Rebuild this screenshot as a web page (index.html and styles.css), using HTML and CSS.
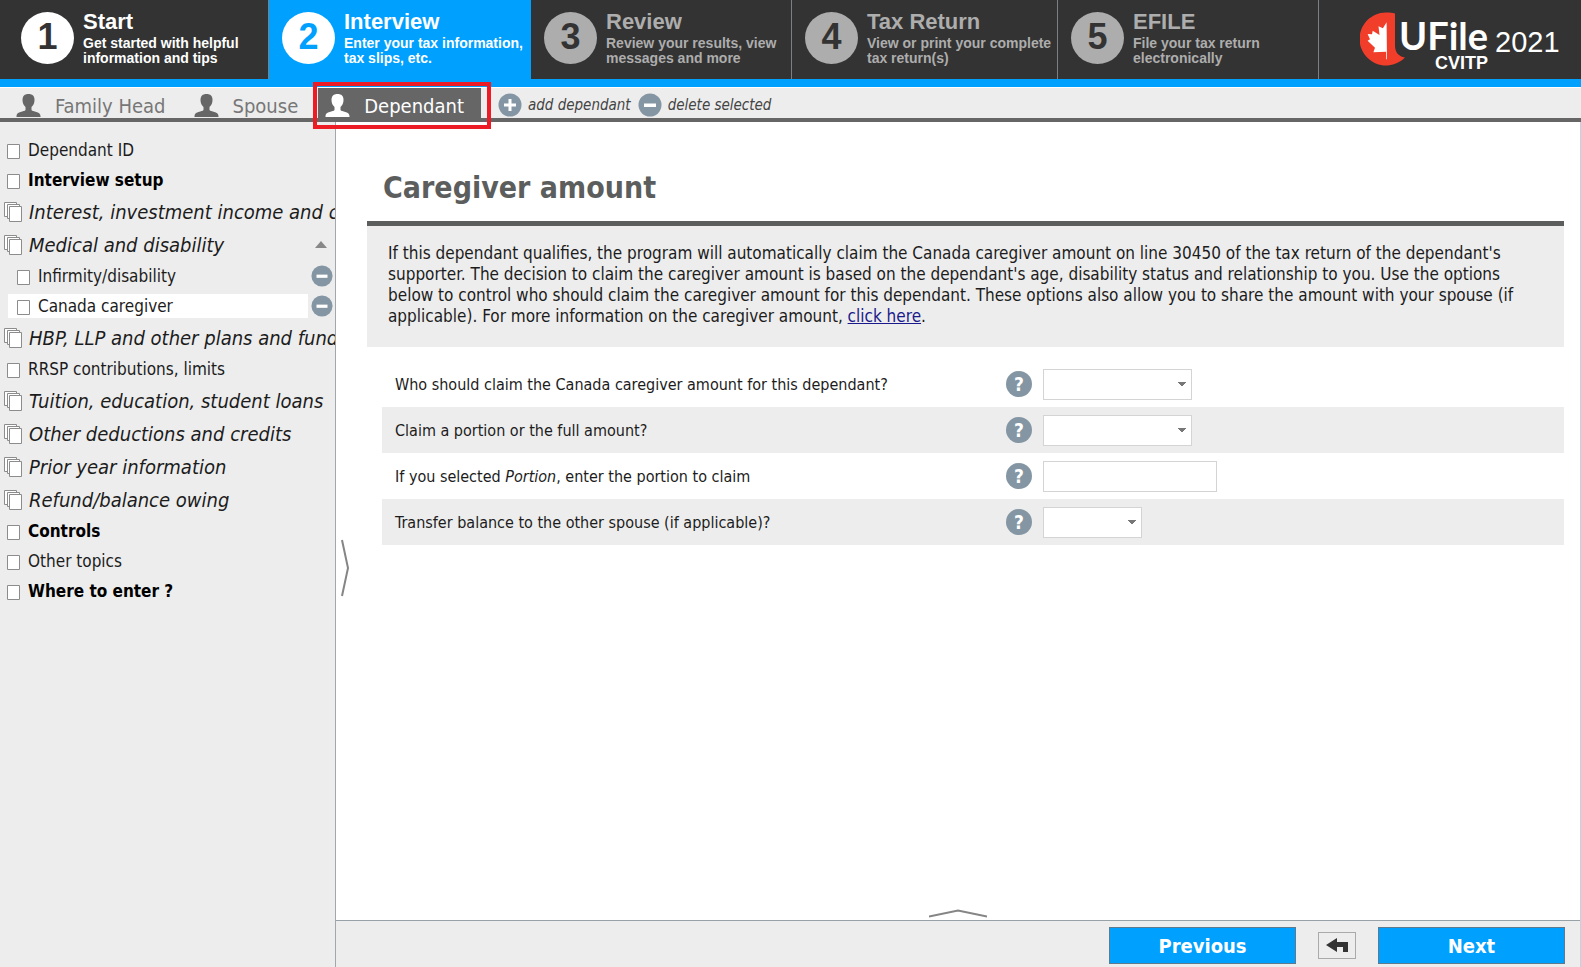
FILE: index.html
```html
<!DOCTYPE html>
<html lang="en">
<head>
<meta charset="utf-8">
<title>UFile CVITP 2021 - Caregiver amount</title>
<link rel="stylesheet" href="styles.css">
</head>
<body>
<svg class="defs" aria-hidden="true">
  <symbol id="person" viewBox="0 0 24 23"><path d="M12 0C8 0 6 2 6 6c0 3 1 5 3 7v3c-1 2-9 1-9 6v1h24v-1c0-5-8-4-9-6v-3c2-2 3-4 3-7 0-4-2-6-6-6z"/></symbol>
  <symbol id="page" viewBox="0 0 13 15"><path d="M.5.5h12v14H.5z" fill="#fff" stroke="#8c8c8c"/></symbol>
  <symbol id="pages" viewBox="0 0 18 20"><g fill="#fff" stroke="#8c8c8c"><path d="M.5.5h12v14H.5z"/><path d="M3.500 2.500h12v14h-12z"/><path d="M5.500 4.500h12v15h-12z"/></g></symbol>
  <symbol id="minus" viewBox="0 0 24 24"><circle cx="12" cy="12" r="11.500" fill="#8496a3"/><path d="M6 10.500h12v3.500H6z" fill="#fff"/></symbol>
  <symbol id="plus" viewBox="0 0 24 24"><circle cx="12" cy="12" r="11.500" fill="#8496a3"/><path d="M6 12h12M12 6v12" stroke="#fff" stroke-width="3"/></symbol>
</svg>
<header class="steps">
  <a class="step done" href="#"><span class="num">1</span><span class="txt"><b>Start</b><span>Get started with helpful<br>information and tips</span></span></a>
  <a class="step active" href="#"><span class="num">2</span><span class="txt"><b>Interview</b><span>Enter your tax information,<br>tax slips, etc.</span></span></a>
  <a class="step" href="#"><span class="num">3</span><span class="txt"><b>Review</b><span>Review your results, view<br>messages and more</span></span></a>
  <a class="step" href="#"><span class="num">4</span><span class="txt"><b>Tax Return</b><span>View or print your complete<br>tax return(s)</span></span></a>
  <a class="step" href="#"><span class="num">5</span><span class="txt"><b>EFILE</b><span>File your tax return<br>electronically</span></span></a>
  <div class="logo">
    <svg width="46" height="54" viewBox="0 0 46 54" aria-hidden="true"><path d="M35 1.500C32 .5 30 .5 27 .5a26.500 26.500 0 1 0 18 45c-7-1-10-6-10-12z" fill="#f03e2b"/><path d="M26.600 10.300l-3.700 6-4.400-2 1 8.700-6.800-4.300-.7 3.600-4.400-.2 2.400 5.200-2.400 1.400 7.400 7-1.600 4.600 12.700-.6.200 7.600h.7z" fill="#fff"/></svg>
    <div class="brand"><span class="name">UFile</span><span class="sub">CVITP</span></div>
    <span class="year">2021</span>
  </div>
</header>
<nav class="people">
  <a class="person" href="#"><svg><use href="#person"/></svg>Family Head</a>
  <a class="person" href="#"><svg><use href="#person"/></svg>Spouse</a>
  <div class="current"><a class="person selected" href="#"><svg><use href="#person"/></svg>Dependant</a></div>
  <button class="action"><svg><use href="#plus"/></svg>add dependant</button>
  <button class="action"><svg><use href="#minus"/></svg>delete selected</button>
</nav>
<div class="work">
  <nav class="side">
    <a class="item" href="#"><svg><use href="#page"/></svg>Dependant ID</a>
    <a class="item strong" href="#"><svg><use href="#page"/></svg>Interview setup</a>
    <a class="item group" href="#"><svg><use href="#pages"/></svg>Interest, investment income and capital gains</a>
    <a class="item group" href="#"><svg><use href="#pages"/></svg>Medical and disability<i class="up"></i></a>
    <div class="child"><a class="item" href="#"><svg><use href="#page"/></svg>Infirmity/disability</a><button class="remove" aria-label="Remove Infirmity/disability"><svg><use href="#minus"/></svg></button></div>
    <div class="child"><a class="item open" href="#"><svg><use href="#page"/></svg>Canada caregiver</a><button class="remove" aria-label="Remove Canada caregiver"><svg><use href="#minus"/></svg></button></div>
    <a class="item group" href="#"><svg><use href="#pages"/></svg>HBP, LLP and other plans and funds</a>
    <a class="item" href="#"><svg><use href="#page"/></svg>RRSP contributions, limits</a>
    <a class="item group" href="#"><svg><use href="#pages"/></svg>Tuition, education, student loans</a>
    <a class="item group" href="#"><svg><use href="#pages"/></svg>Other deductions and credits</a>
    <a class="item group" href="#"><svg><use href="#pages"/></svg>Prior year information</a>
    <a class="item group" href="#"><svg><use href="#pages"/></svg>Refund/balance owing</a>
    <a class="item strong" href="#"><svg><use href="#page"/></svg>Controls</a>
    <a class="item" href="#"><svg><use href="#page"/></svg>Other topics</a>
    <a class="item strong" href="#"><svg><use href="#page"/></svg>Where to enter ?</a>
  </nav>
  <div class="right">
    <main class="main">
      <h1>Caregiver amount</h1>
      <p class="intro">If this dependant qualifies, the program will automatically claim the Canada caregiver amount on line 30450 of the tax return of the dependant's<br>supporter. The decision to claim the caregiver amount is based on the dependant's age, disability status and relationship to you. Use the options<br>below to control who should claim the caregiver amount for this dependant. These options also allow you to share the amount with your spouse (if<br>applicable). For more information on the caregiver amount, <a href="#">click here</a>.</p>
      <form class="form">
        <div class="row"><label for="who">Who should claim the Canada caregiver amount for this dependant?</label><button type="button" class="help">?</button><select id="who" class="field"><option></option></select></div>
        <div class="row"><label for="part">Claim a portion or the full amount?</label><button type="button" class="help">?</button><select id="part" class="field"><option></option></select></div>
        <div class="row"><label for="portion">If you selected <em>Portion</em>, enter the portion to claim</label><button type="button" class="help">?</button><input id="portion" class="field wide" type="text"></div>
        <div class="row"><label for="transfer">Transfer balance to the other spouse (if applicable)?</label><button type="button" class="help">?</button><select id="transfer" class="field narrow"><option></option></select></div>
      </form>
      <button class="expand side-handle" aria-label="Expand sidebar"><svg width="10" height="58" viewBox="0 0 10 58"><path d="M1 1l6 28-6 28" fill="none" stroke="#858585" stroke-width="2"/></svg></button>
      <button class="expand bottom-handle" aria-label="Expand messages"><svg width="58" height="9" viewBox="0 0 58 9"><path d="M0 7.500L29 1.500l29 6" fill="none" stroke="#858585" stroke-width="2"/></svg></button>
    </main>
    <footer class="foot">
      <button class="go">Previous</button>
      <button class="back" aria-label="Back"><svg width="22" height="16" viewBox="0 0 22 16"><path d="M0 7l11-7v4h11v10h-5V9h-6v5z" fill="#333"/></svg></button>
      <button class="go">Next</button>
    </footer>
  </div>
</div>
</body>
</html>
```
FILE: styles.css
```css
* { box-sizing: border-box; }
body {
  margin: 0;
  min-height: 100vh;
  display: flex;
  flex-direction: column;
  background: #fff;
  color: #1c1c1c;
  font-family: "DejaVu Sans Condensed", "Noto Sans", sans-serif;
  font-size: 17px;
}
a { color: inherit; text-decoration: none; }
button { margin: 0; padding: 0; border: 0; background: none; color: inherit; font: inherit; }
svg { display: block; flex: none; }
.defs { position: absolute; width: 0; height: 0; }

.steps {
  display: grid;
  grid-template-columns: 269fr 262fr 261fr 266fr 261fr 262fr;
  height: 87px;
  background: #333;
  border-bottom: 8px solid #00a0ff;
  font-family: "Liberation Sans", Arial, sans-serif;
}
.step {
  display: flex;
  gap: 9px;
  padding: 12px 0 0 13px;
  border-right: 1px solid #7b8085;
  color: #adadad;
  white-space: nowrap;
}
.step:first-child { padding-left: 21px; }
.step.done { color: #fff; }
.step.active { background: #00a0ff; color: #fff; border-color: #00a0ff; }
.num {
  flex: none;
  width: 53px;
  height: 52px;
  border-radius: 50%;
  background: #adadad;
  color: #333;
  font-size: 36px;
  font-weight: bold;
  line-height: 50px;
  text-align: center;
}
.done .num { background: #fff; }
.active .num { background: #fff; color: #00a0ff; }
.txt { font-size: 14px; font-weight: bold; line-height: 15px; }
.txt b { display: block; margin-bottom: 4px; font-size: 22px; line-height: 20px; }
.logo { display: flex; padding: 12px 0 0 41px; color: #fff; }
.brand { display: flex; flex-direction: column; align-items: flex-end; margin-left: -7px; }
.name { font-family: Lato, sans-serif; font-size: 38px; font-weight: bold; line-height: 46px; }
.sub { font-size: 18px; font-weight: bold; line-height: 10px; }
.year { margin-left: 7px; font-size: 29px; line-height: 60px; }

.people {
  display: flex;
  align-items: flex-end;
  height: 35px;
  background: #ededed;
  border-top: 1px solid #fff;
  border-bottom: 4px solid #666;
}
.person {
  display: flex;
  align-items: center;
  gap: 14px;
  height: 30px;
  padding: 5px 0 0 16px;
  color: #777;
  font-size: 20px;
  white-space: nowrap;
}
.person + .person { padding-left: 28px; }
.person svg { width: 25px; height: 23px; fill: #666; }
.current { position: relative; margin: 0 17px 0 20px; }
.current::after {
  content: "";
  position: absolute;
  inset: -6px -10px -11px -5px;
  border: 4px solid #ed1c24;
  z-index: 1;
  pointer-events: none;
}
.selected { padding: 5px 17px 0 7px; background: #666; color: #fff; }
.selected svg { fill: #fff; }
.action {
  display: flex;
  align-items: center;
  gap: 6px;
  height: 30px;
  padding-top: 3px;
  margin-right: 7px;
  color: #444;
  font-size: 15px;
  font-style: italic;
  white-space: nowrap;
}
.action svg { width: 24px; height: 24px; }

.work { flex: 1; display: flex; }
.side {
  flex: none;
  width: 336px;
  padding-top: 13px;
  overflow: hidden;
  background: #ededed;
  border-right: 1px solid #9fa8ad;
}
.item {
  display: flex;
  align-items: center;
  gap: 8px;
  height: 30px;
  padding-left: 7px;
  font-size: 17px;
  white-space: nowrap;
}
.item svg { width: 13px; height: 15px; margin-top: 3px; }
.strong { font-weight: bold; color: #000; }
.group { height: 33px; gap: 7px; padding-left: 4px; font-size: 20px; font-style: italic; }
.group svg { width: 18px; height: 20px; margin-top: 0; }
.up { margin: 0 8px 0 auto; border: 6px solid transparent; border-top: 0; border-bottom: 7px solid #888; }
.child { display: flex; align-items: center; gap: 3px; height: 30px; padding: 0 2px 0 8px; }
.child .item { flex: 1; height: 24px; padding-left: 9px; }
.child .open { background: #fff; }
.remove svg { width: 22px; height: 22px; }

.right { flex: 1; display: flex; flex-direction: column; min-width: 0; border-right: 1px solid #c3d2de; }
.main { position: relative; flex: 1; padding: 46px 16px 0 31px; }
h1 { margin: 0; padding: 0 16px 13px; border-bottom: 5px solid #5c5e5e; color: #5c5e5e; font-size: 30px; line-height: 40px; }
.intro { margin: 0; padding: 17px 21px 20px; background: #ededed; font-size: 17px; line-height: 21px; white-space: nowrap; }
.intro a { color: #1a1a8c; text-decoration: underline; }
.form { margin: 14px 0 0 15px; }
.row { display: flex; align-items: center; height: 46px; padding-left: 13px; font-size: 16px; }
.row:nth-child(even) { background: #ededed; }
.row label { flex: none; width: 611px; }
.help { width: 26px; height: 26px; margin-right: 11px; border-radius: 50%; background: #8496a3; color: #fff; font-size: 19px; font-weight: bold; line-height: 26px; }
.field {
  appearance: none;
  width: 149px;
  height: 31px;
  margin: 0;
  padding: 0 8px;
  border: 1px solid #d4d4d4;
  border-radius: 0;
  background: #fff;
  font: inherit;
}
select.field {
  background-image: linear-gradient(to bottom left, #777 50%, transparent 50%), linear-gradient(to bottom right, #777 50%, transparent 50%);
  background-position: right 9px center, right 5px center;
  background-size: 4px 5px;
  background-repeat: no-repeat;
}
.wide { width: 174px; }
.narrow { width: 99px; }
.expand { position: absolute; }
.side-handle { left: 5px; top: 417px; }
.bottom-handle { left: 593px; bottom: 2px; }
.foot {
  display: flex;
  align-items: center;
  justify-content: flex-end;
  gap: 22px;
  height: 47px;
  padding: 3px 15px 0 0;
  background: #ededed;
  border-top: 1px solid #97a1a8;
}
.go { width: 187px; height: 37px; border: 1px solid #5f7a8c; background: #00a0ff; color: #fff; font-size: 20px; font-weight: bold; }
.back { display: grid; place-items: center; width: 38px; height: 27px; border: 1px solid #aaa; }
```
